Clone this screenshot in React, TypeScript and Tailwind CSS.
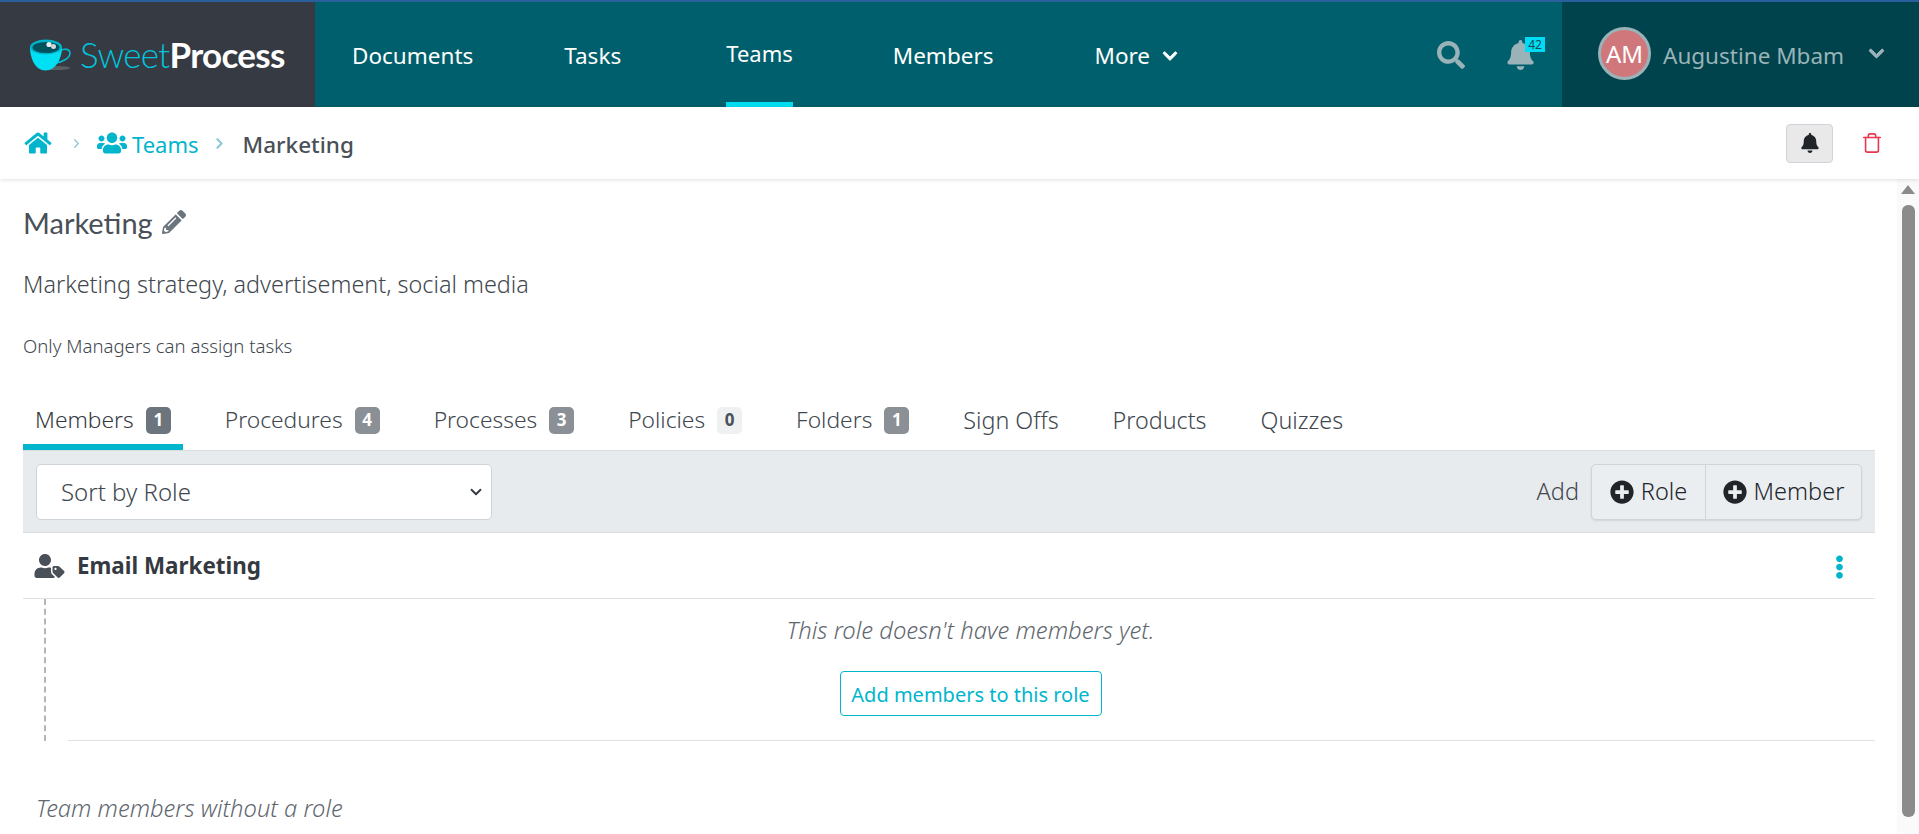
import { ChevronDown, ChevronRight, Trash } from 'lucide-react'
import {
  FaBell,
  FaChevronDown,
  FaEllipsisV,
  FaHome,
  FaPencilAlt,
  FaPlusCircle,
  FaSearch,
  FaUsers,
  FaUserTag,
} from 'react-icons/fa'

const tabs = [
  { label: 'Members', count: '1', active: true, badge: 'bg-[#6c757d] text-white' },
  { label: 'Procedures', count: '4', badge: 'bg-[#8a9096] text-white' },
  { label: 'Processes', count: '3', badge: 'bg-[#8a9096] text-white' },
  { label: 'Policies', count: '0', badge: 'bg-[#eef0f2] text-[#495057]' },
  { label: 'Folders', count: '1', badge: 'bg-[#8a9096] text-white' },
  { label: 'Sign Offs' },
  { label: 'Products' },
  { label: 'Quizzes' },
]

function CupLogo() {
  return (
    <svg viewBox="0 0 44 32" className="h-[32px] w-[44px] shrink-0">
      <ellipse cx="25" cy="29" rx="15" ry="2" fill="#5a5f63" />
      <path d="M29 12c5-3 11-2 11 2 0 5-7 9-15 10" fill="none" stroke="#00b9d6" strokeWidth="1.6" />
      <path d="M0 8c0 11 5 23.5 15.5 23.5S32 19 32 8z" fill="#00e0f5" />
      <ellipse cx="16" cy="8" rx="16" ry="7.5" fill="#00b4c8" />
      <ellipse cx="16" cy="8.5" rx="13.5" ry="5.6" fill="#00525e" />
      <circle cx="19" cy="5.5" r="2.6" fill="#e8eef0" />
      <circle cx="23.5" cy="7.5" r="2.5" fill="#cfd8da" />
    </svg>
  )
}

export default function App() {
  return (
    <div className="flex h-[834px] flex-col overflow-hidden bg-white font-['Noto_Sans',sans-serif] font-light text-[#40474e]">
      {/* Top nav */}
      <header className="flex h-[107px] shrink-0 border-t-2 border-[#2a5f9e] bg-[#005f6c]">
        <div className="flex w-[315px] shrink-0 items-center bg-[#363a42] pl-[30px] font-['Lato',sans-serif]">
          <CupLogo />
          <span className="ml-[6px] text-[35px] leading-none tracking-[-0.7px] text-[#00c5dd]">
            <span className="font-light">Sweet</span>
            <span className="font-bold text-white">Process</span>
          </span>
        </div>

        <nav className="flex flex-1 text-[22.5px] font-normal text-white">
          <a className="ml-[37px] flex items-center pt-[3px]">Documents</a>
          <a className="ml-[91px] flex items-center pt-[3px]">Tasks</a>
          <a className="ml-[105px] flex items-center border-b-[5px] border-[#00dcef] pt-[3px] text-[22px]">Teams</a>
          <a className="ml-[100px] flex items-center pt-[3px]">Members</a>
          <a className="ml-[101px] flex items-center gap-[12px] pt-[3px]">
            More <FaChevronDown className="h-[16px] w-[16px]" stroke="currentColor" strokeWidth={30} />
          </a>
        </nav>

        <div className="flex items-center text-[#9ab3b8]">
          <FaSearch className="h-[28px] w-[28px]" />
          <div className="relative ml-[42px] mr-[28px]">
            <FaBell className="h-[30px] w-[27px]" />
            <span className="absolute left-[18px] top-[-3px] h-[15px] w-[20px] bg-[#00dcf5] text-center text-[12px] font-normal leading-[15px] text-[#174a52]">
              42
            </span>
          </div>
        </div>

        <div className="flex w-[357px] shrink-0 items-center bg-[#00434d] pb-[2px] pl-[36px] text-[#9ab3b8]">
          <div className="flex h-[53px] w-[53px] items-center justify-center rounded-full border-[3px] border-[#9ab3b8] bg-[#d0777c] text-[24px] font-normal text-white">
            AM
          </div>
          <span className="ml-[12px] pt-[4px] text-[22.5px] font-normal">Augustine Mbam</span>
          <FaChevronDown className="ml-[24px] h-[17px] w-[17px]" stroke="currentColor" strokeWidth={30} />
        </div>
      </header>

      {/* Breadcrumb */}
      <div className="relative z-10 flex h-[72px] shrink-0 items-center pl-[24px] pr-[36px] shadow-[0_1px_4px_rgba(0,0,0,0.12)]">
        <FaHome className="h-[24px] w-[28px] text-[#00b5cc]" />
        <ChevronRight className="ml-[17px] h-[15px] w-[15px] text-[#8cc9d4]" />
        <FaUsers className="ml-[13px] h-[24px] w-[30px] text-[#00b5cc]" />
        <span className="ml-[5px] pt-[3px] text-[22px] font-normal text-[#00b5cc]">Teams</span>
        <ChevronRight className="ml-[12px] h-[17px] w-[17px] text-[#8cc9d4]" strokeWidth={3} />
        <span className="ml-[15px] pt-[3px] text-[22.5px] font-medium text-[#495057]">Marketing</span>
        <button className="ml-auto flex h-[39px] w-[47px] items-center justify-center rounded-[4px] border border-[#ced4da] bg-[#e9e9e9]">
          <FaBell className="h-[20px] w-[20px] text-[#212529]" />
        </button>
        <Trash className="ml-[28px] h-[22px] w-[22px] text-[#e63950]" strokeWidth={1.75} />
      </div>

      {/* Body */}
      <div className="flex min-h-0 flex-1">
        <main className="min-w-0 flex-1 pl-[23px] pr-[22px] pt-[23px]">
          <div className="flex h-[40px] items-center gap-[9px] font-['Lato',sans-serif]">
            <h1 className="text-[29px] font-normal leading-none text-[#495057]">Marketing</h1>
            <FaPencilAlt className="h-[24px] w-[24px] text-[#6c757d]" />
          </div>
          <p className="mt-[27px] h-[30px] text-[23.4px] leading-[30px]">Marketing strategy, advertisement, social media</p>
          <p className="mt-[35px] h-[24px] text-[18.6px] leading-[24px]">Only Managers can assign tasks</p>

          <div className="mt-[32px] flex h-[60px] gap-[30px]">
            {tabs.map(tab => (
              <div
                key={tab.label}
                className={`flex items-center gap-[12px] px-[12px] ${tab.count ? 'text-[22.8px]' : 'text-[23.3px]'} ${
                  tab.active ? 'border-b-[6px] border-[#00b5cc] pt-[6px] text-[#343a40]' : ''
                }`}
              >
                {tab.label}
                {tab.count && (
                  <span className={`flex h-[27px] w-[25px] items-center justify-center rounded-[5px] text-[17px] font-bold ${tab.badge}`}>
                    {tab.count}
                  </span>
                )}
              </div>
            ))}
          </div>

          {/* Toolbar */}
          <div className="flex h-[83px] items-center justify-between border-y border-[#d8dde1] bg-[#e8ebee] pl-[13px] pr-[13px]">
            <div className="flex h-[56px] w-[456px] items-center justify-between rounded-[5px] border border-[#ced4da] bg-white pl-[24px] pr-[6px] text-[24px]">
              Sort by Role
              <ChevronDown className="h-[18px] w-[18px] text-[#343a40]" strokeWidth={2.5} />
            </div>
            <div className="flex items-center">
              <span className="mr-[12px] text-[23.5px]">Add</span>
              <div className="flex h-[56px] rounded-[5px] border border-[#ced4da] bg-[#ebeef1] text-[23.5px] text-[#212529] shadow-[0_1px_2px_rgba(0,0,0,0.1)]">
                <button className="flex w-[114px] items-center justify-center gap-[7px] border-r border-[#ced4da]">
                  <FaPlusCircle className="h-[24px] w-[24px]" /> Role
                </button>
                <button className="flex w-[155px] items-center justify-center gap-[7px]">
                  <FaPlusCircle className="h-[24px] w-[24px]" /> Member
                </button>
              </div>
            </div>
          </div>

          {/* Role */}
          <div className="flex h-[66px] items-center border-b border-[#dee2e6] pl-[11px] pr-[31px]">
            <FaUserTag className="h-[24px] w-[31px] text-[#495057]" />
            <span className="ml-[12px] pt-[1px] text-[22.4px] font-bold text-[#343a40]">Email Marketing</span>
            <FaEllipsisV className="ml-auto mt-[3px] h-[24px] w-[9px] text-[#00b5cc]" />
          </div>
          <div className="flex h-[142px]">
            <div className="ml-[21px] border-l-2 border-dashed border-[#b5b5b5]" />
            <div className="ml-[22px] flex flex-1 flex-col items-center border-b border-[#dee2e6] pr-[2px] pt-[16px]">
              <p className="h-[30px] text-[23.8px] italic leading-[30px] text-[#5f6870]">This role doesn't have members yet.</p>
              <button className="mt-[26px] flex h-[45px] w-[262px] items-center justify-center rounded-[4px] border border-[#00b5cc] pt-[2px] text-[20px] font-normal text-[#00b5cc]">
                Add members to this role
              </button>
            </div>
          </div>

          <p className="mt-[52px] h-[30px] pl-[13px] text-[23.7px] italic leading-[30px] text-[#5f6870]">Team members without a role</p>
        </main>

        {/* Scrollbar */}
        <div className="flex w-[22px] shrink-0 flex-col items-center bg-[#fafafa] pt-[6px]">
          <div className="h-0 w-0 border-x-[7px] border-b-[9px] border-x-transparent border-b-[#8b8b8b]" />
          <div className="mt-[11px] h-[612px] w-[13px] rounded-[6px] bg-[#8b8b8b]" />
        </div>
      </div>
    </div>
  )
}
